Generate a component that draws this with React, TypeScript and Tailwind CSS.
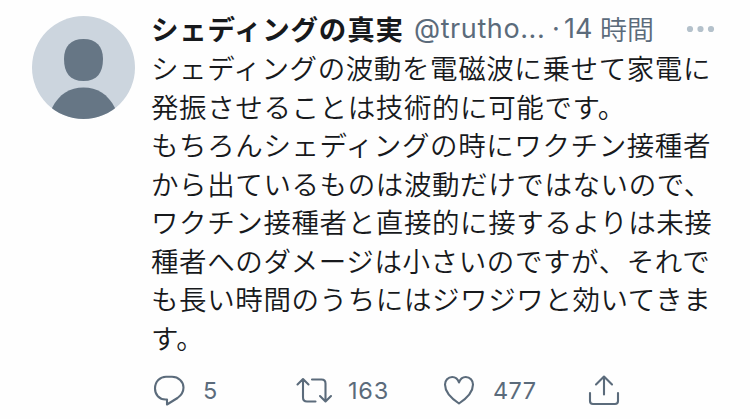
import React from "react";

interface Tweet {
  name: string;
  handle: string;
  time: string;
  lines: string[];
  replies: number;
  retweets: number;
  likes: number;
}

const tweet: Tweet = {
  name: "シェディングの真実",
  handle: "@trutho...",
  time: "時間",
  lines: [
    "シェディングの波動を電磁波に乗せて家電に",
    "発振させることは技術的に可能です。",
    "もちろんシェディングの時にワクチン接種者",
    "から出ているものは波動だけではないので、",
    "ワクチン接種者と直接的に接するよりは未接",
    "種者へのダメージは小さいのですが、それで",
    "も長い時間のうちにはジワジワと効いてきま",
    "す。",
  ],
  replies: 5,
  retweets: 163,
  likes: 477,
};

const Avatar = () => (
  <svg className="size-[104px] shrink-0" viewBox="0 0 104 104">
    <defs>
      <clipPath id="avatar-circle">
        <circle cx="52.5" cy="52.5" r="51.5" />
      </clipPath>
    </defs>
    <g clipPath="url(#avatar-circle)">
      <rect width="104" height="104" fill="#ccd5de" />
      <path
        d="M52.500 24C65 24 72 31 72 44C72 58 66 66 52.500 66C39 66 33 58 33 44C33 31 40 24 52.500 24Z"
        fill="#667685"
      />
      <path d="M21 93C28 79 39 72.500 52.500 72.500C66 72.500 77 79 84 93L84 104L21 104Z" fill="#667685" />
    </g>
  </svg>
);

interface IconProps {
  children: React.ReactNode;
}

const Icon: React.FC<IconProps> = ({ children }) => (
  <svg
    className="size-9 shrink-0 overflow-visible"
    viewBox="0 0 36 36"
    fill="none"
    stroke="currentColor"
    strokeWidth="2.1"
    strokeLinecap="round"
    strokeLinejoin="round"
  >
    {children}
  </svg>
);

const App: React.FC = () => {
  return (
    <article className="flex h-[419px] w-[750px] overflow-hidden bg-[#fefefe] pl-[31px] font-['Inter','Noto_Sans_CJK_JP',sans-serif] text-[#17191c]">
      <div className="pt-[15px]">
        <Avatar />
      </div>

      <div className="ml-4 flex w-[570px] flex-col pt-[10px]">
        <header className="flex h-[38px] items-center whitespace-nowrap text-[27px] text-[#5b6b7b]">
          <span className="w-[263px] font-['Noto_Sans_CJK_JP',sans-serif] font-bold tracking-[0.8px] text-[27.5px] text-[#17191c]">
            {tweet.name}
          </span>
          <span className="w-[138px] pt-px tracking-[0.6px]">{tweet.handle}</span>
          <span className="w-[12px] pt-px">·</span>
          <span className="w-[36px] pt-px">14</span>
          <span className="font-['Noto_Sans_CJK_JP',sans-serif] font-[350]">{tweet.time}</span>
          <svg className="ml-auto mr-[5px] h-2 w-[30px]" viewBox="0 0 30 8" fill="#b4c1cb">
            <circle cx="4" cy="4" r="3.1" />
            <circle cx="14.500" cy="4" r="3.1" />
            <circle cx="25" cy="4" r="3.1" />
          </svg>
        </header>

        <div className="whitespace-nowrap font-['Noto_Sans_CJK_JP',sans-serif] text-[27.5px] leading-[38.5px] font-[350] tracking-[0.6px]">
          {tweet.lines.map((line) => (
            <p key={line}>{line}</p>
          ))}
        </div>

        <footer className="mt-4 flex h-9 items-center text-[23.5px] text-[#5b6b7b]">
          <div className="flex w-[144px] items-center gap-[16px]">
            <Icon>
              <path d="M15.500 27.500H14.500C8 27.500 4 22.500 4 16.500C4 9.500 9 4.800 15 4.800H21C27.500 4.800 32.500 9.500 32.500 15.500C32.500 20 30 23.500 26.500 26L16 32.500V27.500Z" />
            </Icon>
            <span className="pt-px">{tweet.replies}</span>
          </div>
          <div className="flex w-[146px] items-center gap-[17px]">
            <Icon>
              <path d="M2.500 12.500L8 7L13.500 12.500M8 8V25.500Q8 29.500 12 29.500H20.500M17 7.500H26.500Q30.500 7.500 30.500 11.500V29M25 24L30.500 29.500L36 24" />
            </Icon>
            <span className="pt-px tracking-[0.8px]">{tweet.retweets}</span>
          </div>
          <div className="flex w-[145px] items-center gap-[16px]">
            <Icon>
              <path d="M18 31.500C12 27.500 4 20.500 4 12.500C4 8.500 7 5 11.200 5C14.500 5 17 7.500 18 10.500C19 7.500 21.500 5 24.800 5C29 5 32 8.500 32 12.500C32 20.500 24 27.500 18 31.500Z" />
            </Icon>
            <span className="pt-px tracking-[0.4px]">{tweet.likes}</span>
          </div>
          <Icon>
            <path d="M18 22.500V5M10 12.500L18 4.500L26 12.500M4 21V29Q4 32 7 32H29Q32 32 32 29V21" />
          </Icon>
        </footer>
      </div>
    </article>
  );
};

export default App;
